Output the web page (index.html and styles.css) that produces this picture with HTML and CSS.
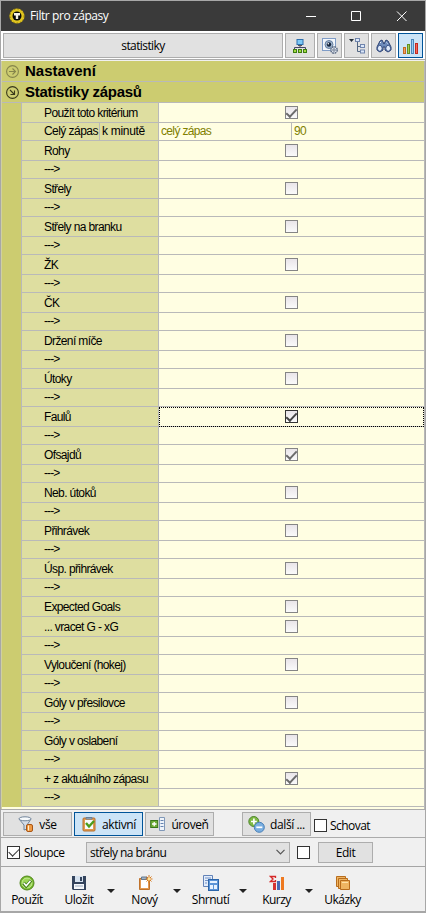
FILE: index.html
```html
<!DOCTYPE html>
<html lang="cs">
<head>
<meta charset="utf-8">
<title>Filtr pro zápasy</title>
<link rel="stylesheet" href="styles.css">
</head>
<body>
<div class="window">
  <header class="titlebar">
    <svg class="app-icon" width="16" height="16" viewBox="0 0 16 16"><circle cx="8" cy="8" r="7.600" fill="#e0c520"/><circle cx="8" cy="8" r="7.200" fill="none" stroke="#6f5e08" stroke-width=".9" stroke-dasharray="1.500 1.900"/><circle cx="8" cy="8" r="4.500" fill="#080808"/><path d="M5 5h6v2.500H9.200V11H6.800V7.500H5z" fill="#f5f2e8"/></svg>
    <h1 class="title">Filtr pro zápasy</h1>
    <svg class="controls" width="102" height="12" viewBox="0 0 102 12" fill="none" stroke="#fff"><path d="M0 6.500h10M45.500 1.500h9v9h-9zM91 1.500l9.500 9.500M100.500 1.500L91 11"/></svg>
  </header>

  <nav class="topbar">
    <button class="btn wide">statistiky</button>
    <button class="btn ico first"><svg width="16" height="16" viewBox="0 0 16 16"><path d="M8 7v3M2.500 11V9.500h11V11" fill="none" stroke="#446"/><rect x="5" y="1.500" width="6" height="5" fill="#7cc8f5" stroke="#2d6fae"/><path d="M6 7.500h4" stroke="#555"/><g fill="#a4dc42" stroke="#3d7d10"><rect x="1.500" y="11.500" width="3" height="3"/><rect x="6.500" y="11.500" width="3" height="3"/><rect x="11.500" y="11.500" width="3" height="3"/></g></svg></button>
    <button class="btn ico"><svg width="16" height="16" viewBox="0 0 16 16"><rect x=".5" y=".5" width="13" height="12" fill="#f3f7fc" stroke="#7f9cc7"/><circle cx="7" cy="6.500" r="4" fill="#a3b6cf" stroke="#66809f"/><circle cx="7" cy="6.500" r="2.200" fill="#15253d"/><circle cx="6.300" cy="5.700" r=".8" fill="#fff"/><circle cx="12" cy="12" r="3.200" fill="#e2e8f0" stroke="#5d6c85" stroke-width="1.500" stroke-dasharray="1.800 .7"/><circle cx="12" cy="12" r="1.200" fill="#fff" stroke="#5d6c85"/></svg></button>
    <button class="btn ico"><svg width="16" height="16" viewBox="0 0 16 16"><path d="M0 1h5L2.500 4z" fill="#222d38"/><path d="M8.500 4v9.500H11M8.500 8.500H11" fill="none" stroke="#536782"/><g fill="#dce8fa" stroke="#7085ad"><rect x="6.500" y=".5" width="4" height="3"/><rect x="11.500" y="6.500" width="4" height="3"/><rect x="11.500" y="12" width="4" height="3"/></g></svg></button>
    <button class="btn ico"><svg width="16" height="16" viewBox="0 0 16 16"><path d="M4 3l2-1 2 4 2-4 2 1 3 6v3l-3 2-3-2V9H7v3l-3 2-3-2V9z" fill="#6d8bbb" stroke="#283e70"/><ellipse cx="3.800" cy="10.300" rx="2.400" ry="3" fill="#dfeafa" stroke="#344d84"/><ellipse cx="12.200" cy="10.300" rx="2.400" ry="3" fill="#dfeafa" stroke="#344d84"/><path d="M4 5l1-1M10.500 4.500l1 1" stroke="#e4effd"/></svg></button>
    <button class="btn ico active"><svg width="16" height="16" viewBox="0 0 16 16"><rect x=".5" y="9.500" width="2" height="6" fill="#f0a063" stroke="#c36a20"/><rect x="4.500" y="6.500" width="2" height="9" fill="#a5cf50" stroke="#618f22"/><rect x="8.500" y="1.500" width="2" height="14" fill="#9ccdf3" stroke="#4a89bd"/><rect x="12.500" y="5.500" width="2" height="10" fill="#f26b5c" stroke="#c52b22"/></svg></button>
  </nav>

  <main class="grid">
    <h2 class="group"><svg class="muted" width="13" height="13" viewBox="0 0 13 13"><circle cx="6.500" cy="6.500" r="5.900"/><path d="M3 6.500h6.500M6.500 3.500l3 3-3 3"/></svg><span class="g1">Nastavení</span></h2>
    <h2 class="group"><svg width="13" height="13" viewBox="0 0 13 13"><circle cx="6.500" cy="6.500" r="5.900"/><path d="M4 4l4.500 4.500M8.500 4.500v4h-4"/></svg><span class="g2">Statistiky zápasů</span></h2>
    <div class="rows">
      <div class="row"><div class="label">Použít toto kritérium</div><div class="value"><i class="chk on"></i></div></div>
      <div class="row short"><div class="label split"><span class="part">Celý zápas</span><span class="part2">k minutě</span></div><div class="value pair"><span class="a">celý zápas</span><span class="b">90</span></div></div>
      <div class="row"><div class="label">Rohy</div><div class="value"><i class="chk"></i></div></div>
      <div class="row short"><div class="label">---&gt;</div><div class="value"></div></div>
      <div class="row"><div class="label">Střely</div><div class="value"><i class="chk"></i></div></div>
      <div class="row short"><div class="label">---&gt;</div><div class="value"></div></div>
      <div class="row"><div class="label">Střely na branku</div><div class="value"><i class="chk"></i></div></div>
      <div class="row short"><div class="label">---&gt;</div><div class="value"></div></div>
      <div class="row"><div class="label">ŽK</div><div class="value"><i class="chk"></i></div></div>
      <div class="row short"><div class="label">---&gt;</div><div class="value"></div></div>
      <div class="row"><div class="label">ČK</div><div class="value"><i class="chk"></i></div></div>
      <div class="row short"><div class="label">---&gt;</div><div class="value"></div></div>
      <div class="row"><div class="label">Držení míče</div><div class="value"><i class="chk"></i></div></div>
      <div class="row short"><div class="label">---&gt;</div><div class="value"></div></div>
      <div class="row"><div class="label">Útoky</div><div class="value"><i class="chk"></i></div></div>
      <div class="row short"><div class="label">---&gt;</div><div class="value"></div></div>
      <div class="row"><div class="label">Faulů</div><div class="value focus"><i class="chk on"></i></div></div>
      <div class="row short"><div class="label">---&gt;</div><div class="value"></div></div>
      <div class="row"><div class="label">Ofsajdů</div><div class="value"><i class="chk on"></i></div></div>
      <div class="row short"><div class="label">---&gt;</div><div class="value"></div></div>
      <div class="row"><div class="label">Neb. útoků</div><div class="value"><i class="chk"></i></div></div>
      <div class="row short"><div class="label">---&gt;</div><div class="value"></div></div>
      <div class="row"><div class="label">Přihrávek</div><div class="value"><i class="chk"></i></div></div>
      <div class="row short"><div class="label">---&gt;</div><div class="value"></div></div>
      <div class="row"><div class="label">Úsp. přihrávek</div><div class="value"><i class="chk"></i></div></div>
      <div class="row short"><div class="label">---&gt;</div><div class="value"></div></div>
      <div class="row"><div class="label">Expected Goals</div><div class="value"><i class="chk"></i></div></div>
      <div class="row"><div class="label">... vracet G - xG</div><div class="value"><i class="chk"></i></div></div>
      <div class="row short"><div class="label">---&gt;</div><div class="value"></div></div>
      <div class="row"><div class="label">Vyloučení (hokej)</div><div class="value"><i class="chk"></i></div></div>
      <div class="row short"><div class="label">---&gt;</div><div class="value"></div></div>
      <div class="row"><div class="label">Góly v přesilovce</div><div class="value"><i class="chk"></i></div></div>
      <div class="row short"><div class="label">---&gt;</div><div class="value"></div></div>
      <div class="row"><div class="label">Góly v oslabení</div><div class="value"><i class="chk"></i></div></div>
      <div class="row short"><div class="label">---&gt;</div><div class="value"></div></div>
      <div class="row"><div class="label">+ z aktuálního zápasu</div><div class="value"><i class="chk on"></i></div></div>
      <div class="row short"><div class="label">---&gt;</div><div class="value"></div></div>
    </div>
  </main>

  <section class="filters">
    <button class="btn"><svg width="16" height="16" viewBox="0 0 16 16"><path d="M1 3l5 6v5l3-1V9l4-6z" fill="#d3dce7" stroke="#71859b"/><ellipse cx="7" cy="2.800" rx="6" ry="2" fill="#f7fafc" stroke="#71859b"/><rect x="8.500" y="8.500" width="6" height="7" rx="1.500" fill="#ee9a45" stroke="#a95514"/><path d="M10.500 9.500v5" stroke="#fff1d4"/></svg><span>vše</span></button>
    <button class="btn active"><svg width="16" height="16" viewBox="0 0 16 16"><rect x="2" y="2" width="12" height="13" rx="1" fill="#e09a50" stroke="#b8712c"/><path d="M4 4h8v9H4z" fill="#f8fafc"/><path d="M5 3V1.500h6V3z" fill="#a6bbd0" stroke="#687f97"/><path d="M5 7l3 3.500L13 5" fill="none" stroke="#4c9c1d" stroke-width="2.400"/></svg><span>aktivní</span></button>
    <button class="btn"><svg width="16" height="16" viewBox="0 0 16 16"><path d="M9.500 1.500h5v13h-5z" fill="#eef3fa" stroke="#8098b8"/><path d="M10.500 4.500h3M10.500 7.500h3M10.500 10.500h3" stroke="#6684b1"/><rect x=".7" y="4.500" width="7" height="7" fill="#6ead35" stroke="#39751b"/><path d="M2 8h4.500M4.200 6v4.200" stroke="#fff" stroke-width="1.300"/></svg><span>úroveň</span></button>
    <button class="btn more"><svg width="17" height="17" viewBox="0 0 17 17"><circle cx="5.800" cy="5.500" r="5" fill="#7fba45" stroke="#4c842b"/><path d="M3 5.500h5.800M5.900 2.500v6" stroke="#fff" stroke-width="1.700"/><circle cx="11.300" cy="11.300" r="5" fill="#79aee0" stroke="#477eb6"/><path d="M8.300 11.300h6" stroke="#fff" stroke-width="1.700"/></svg><span>další ...</span></button>
    <label class="check"><i class="box"></i><span class="sch">Schovat</span></label>
  </section>

  <section class="columns">
    <label class="check"><i class="box ticked"></i><span class="slp">Sloupce</span></label>
    <div class="select"><span>střely na bránu</span><svg width="9" height="6" viewBox="0 0 9 6"><path d="M.5 .8l4 4 4-4" fill="none" stroke="#555" stroke-width="1.200"/></svg></div>
    <i class="box solo"></i>
    <button class="btn edit">Edit</button>
  </section>

  <footer class="actions">
    <div class="action"><svg width="16" height="16" viewBox="0 0 16 16"><circle cx="8" cy="8" r="7" fill="#75b92b" stroke="#52871d"/><circle cx="8" cy="8" r="5" fill="#9cd657" stroke="#c8eb98"/><path d="M4.500 8l2.700 3L12 5.500" fill="none" stroke="#427c1b" stroke-width="3.400"/><path d="M4.800 8l2.400 2.700L11.500 5.800" fill="none" stroke="#fff" stroke-width="1.600"/></svg><span>Použít</span></div>
    <div class="action"><svg width="16" height="16" viewBox="0 0 16 16"><path d="M1 1h14v14H2l-1-1z" fill="#34445d"/><path d="M4 1h8v6H4z" fill="#d6e2ef"/><path d="M9 2h2v4H9z" fill="#34445d"/><path d="M3 9h10v5H3z" fill="#f5f7fa"/><path d="M4 11h8" stroke="#9babbf"/></svg><span>Uložit</span></div>
    <i class="arrow"></i>
    <div class="action"><svg width="16" height="16" viewBox="0 0 16 16"><path d="M2.500 3.500h10v11h-10z" fill="#e39a52" stroke="#c0722b"/><path d="M4 5h7v8H4z" fill="#fff"/><path d="M4.500 2h5v2.500h-5z" fill="#9fb2c5" stroke="#64798f"/><path d="M12 0v8M8.500 4h7M9.500 1.500l5 5M14.500 1.500l-5 5" stroke="#d67a21"/><circle cx="12" cy="4" r="1.500" fill="#ffe497"/></svg><span>Nový</span></div>
    <i class="arrow"></i>
    <div class="action"><svg width="18" height="16" viewBox="0 0 18 16"><path d="M1.500 .5h9v11h-9z" fill="#e3edfb" stroke="#6383b8"/><path d="M3 3h6M3 5.500h3M3 8h2" stroke="#7492c4"/><rect x="6.500" y="4.500" width="10" height="11" fill="#5c95d7" stroke="#2b65aa"/><path d="M8 6h7v2H8zM8 10h3v4H8zM12 10h3v4h-3z" fill="#e8f3ff"/></svg><span>Shrnutí</span></div>
    <i class="arrow"></i>
    <div class="action"><svg width="16" height="16" viewBox="0 0 16 16"><path d="M6.500 3V1.500h-5L4 4 1.500 6.500h5V5" fill="none" stroke="#d52929" stroke-width="1.300"/><path d="M4 8h3v7H4z" fill="#d43232"/><path d="M8 6h3v9H8z" fill="#4769b4"/><path d="M12 2h3v13h-3z" fill="#ee7920"/></svg><span>Kurzy</span></div>
    <i class="arrow"></i>
    <div class="action"><svg width="16" height="16" viewBox="0 0 16 16"><g fill="#efb562" stroke="#b86d1d"><path d="M1.500 1.500h9v10h-9z"/><path d="M3.500 3.500h9v10h-9z"/><path d="M5.500 5.500h9v9h-9z"/></g><path d="M7 7.500h6" stroke="#ffe1a6"/></svg><span>Ukázky</span></div>
  </footer>
</div>
</body>
</html>
```
FILE: styles.css
```css
* { box-sizing: border-box; }
body { margin: 0; width: 426px; height: 913px; overflow: hidden; font: 12px "Open Sans", sans-serif; color: #000; }
h1, h2 { margin: 0; font-weight: 400; }
i { font-style: normal; }
svg { display: block; flex: none; }
.window { width: 426px; height: 913px; display: flex; flex-direction: column; background: #f0f0f0; border: solid #a7a7a7; border-width: 1px 1px 2px; }

.titlebar { height: 30px; background: #3a3a3a; display: flex; align-items: center; padding: 0 17px 0 8px; color: #fff; flex: none; }
.title { font-size: 12px; line-height: 16px; margin-left: 5px; letter-spacing: -.42px; white-space: nowrap; }
.controls { margin: -1px 0 0 auto; }

.topbar { height: 29px; background: #fff; display: flex; gap: 2px; padding: 2px 0 2px 2px; border-bottom: 1px solid #ababab; flex: none; }
.btn { font: inherit; color: #000; background: #e1e1e1; border: 1px solid #adadad; padding: 0; display: flex; align-items: center; justify-content: center; letter-spacing: -.4px; white-space: nowrap; flex: none; }
.btn.active { background: #cce4f7; border-color: #005499; }
.wide { width: 280px; height: 25px; letter-spacing: -.6px; }
.ico { width: 25px; height: 25px; }
.ico.first { width: 30px; }

.grid { height: 748px; flex: none; margin: 1px 0 0; border-left: 1px solid #d0d0a0; border-right: 1px solid #b8b8b8; background: #fffee2; font-family: "Liberation Sans", sans-serif; }
.group { height: 21px; display: flex; align-items: center; background: #cccc70; border-bottom: 1px solid #b9b9b9; padding-left: 4px; font-size: 15px; font-weight: 700; line-height: 20px; }
.group svg { fill: none; stroke: #39391a; stroke-width: 1.100; margin-right: 6px; }
.group svg.muted { stroke: #85854b; }
.g1 { letter-spacing: 0; }
.g2 { letter-spacing: -.3px; }
.rows { border-left: 19px solid #cccc70; }
.row { height: 20px; display: grid; grid-template: 100% / 138px 1fr; }
.row.short { height: 18px; }
.label, .value { border-bottom: 1px solid #b9b9b9; }
.label { background: #dedea0; border-left: 1px solid #b9b9b9; border-right: 1px solid #b9b9b9; padding: 1px 0 0 22px; line-height: 18px; letter-spacing: -.62px; white-space: nowrap; overflow: hidden; }
.short .label { padding-top: 0; line-height: 17px; letter-spacing: -.9px; }
.value { display: flex; align-items: center; justify-content: center; background: #fffee2; }
.short .label.split { display: flex; letter-spacing: -.55px; }
.part { width: 56px; border-right: 1px solid #b9b9b9; flex: none; }
.part2 { padding-left: 2px; letter-spacing: -.3px; }
.value.pair { justify-content: flex-start; align-items: stretch; color: #808000; line-height: 17px; letter-spacing: -.65px; }
.a { width: 133px; padding-left: 2px; border-right: 1px solid #b9b9b9; }
.b { padding-left: 2px; }
.focus { outline: 1px dotted #000; outline-offset: -1px; }
.chk { width: 13px; height: 13px; border: 1px solid #858585; background: linear-gradient(#e9e5e9, #fafafa); display: flex; align-items: center; justify-content: center; }
.chk.on::before { content: ""; width: 9px; height: 4px; border: solid #6b6b6b; border-width: 0 0 2px 2px; transform: translateY(-1px) rotate(-47deg); }
.focus .chk { border-color: #333; }
.focus .chk::before { border-color: #444; }

.filters { height: 29px; display: flex; align-items: flex-start; gap: 2px; padding: 2px 0 0 2px; border-top: 1px solid #ababab; border-bottom: 1px solid #ababab; flex: none; }
.filters .btn { width: 69px; height: 24px; gap: 5px; }
.filters .more { margin-left: 26px; }
.check { display: flex; align-items: center; gap: 4px; white-space: nowrap; }
.filters .check { height: 26px; margin-left: 1px; gap: 3px; }
.box { width: 13px; height: 13px; border: 1px solid #333; background: #fff; display: flex; align-items: center; justify-content: center; flex: none; }
.box.ticked::before { content: ""; width: 9px; height: 5px; border: solid #333; border-width: 0 0 1px 1px; transform: translateY(-1px) rotate(-45deg); }
.sch { letter-spacing: -.55px; }
.slp { letter-spacing: -.5px; }

.columns { height: 29px; display: flex; align-items: center; padding-left: 6px; border-bottom: 1px solid #a5a5a5; flex: none; }
.columns .check { width: 79px; }
.select { width: 204px; height: 21px; display: flex; align-items: center; justify-content: space-between; padding: 0 4px 0 3px; background: #e1e1e1; border: 1px solid #adadad; letter-spacing: -.55px; }
.solo { margin: 0 8px 0 7px; }
.edit { width: 55px; height: 21px; }

.actions { height: 45px; display: grid; grid-template-columns: 52px 52px 13px 53px 13px 53px 13px 53px 13px 53px; padding-top: 8px; flex: none; }
.action { display: flex; flex-direction: column; align-items: center; gap: 1px; line-height: 15px; letter-spacing: -.5px; white-space: nowrap; }
.arrow { width: 0; height: 0; border: 4px solid transparent; border-top-color: #222; border-bottom: 0; margin: 14px 0 0 2px; }
```
